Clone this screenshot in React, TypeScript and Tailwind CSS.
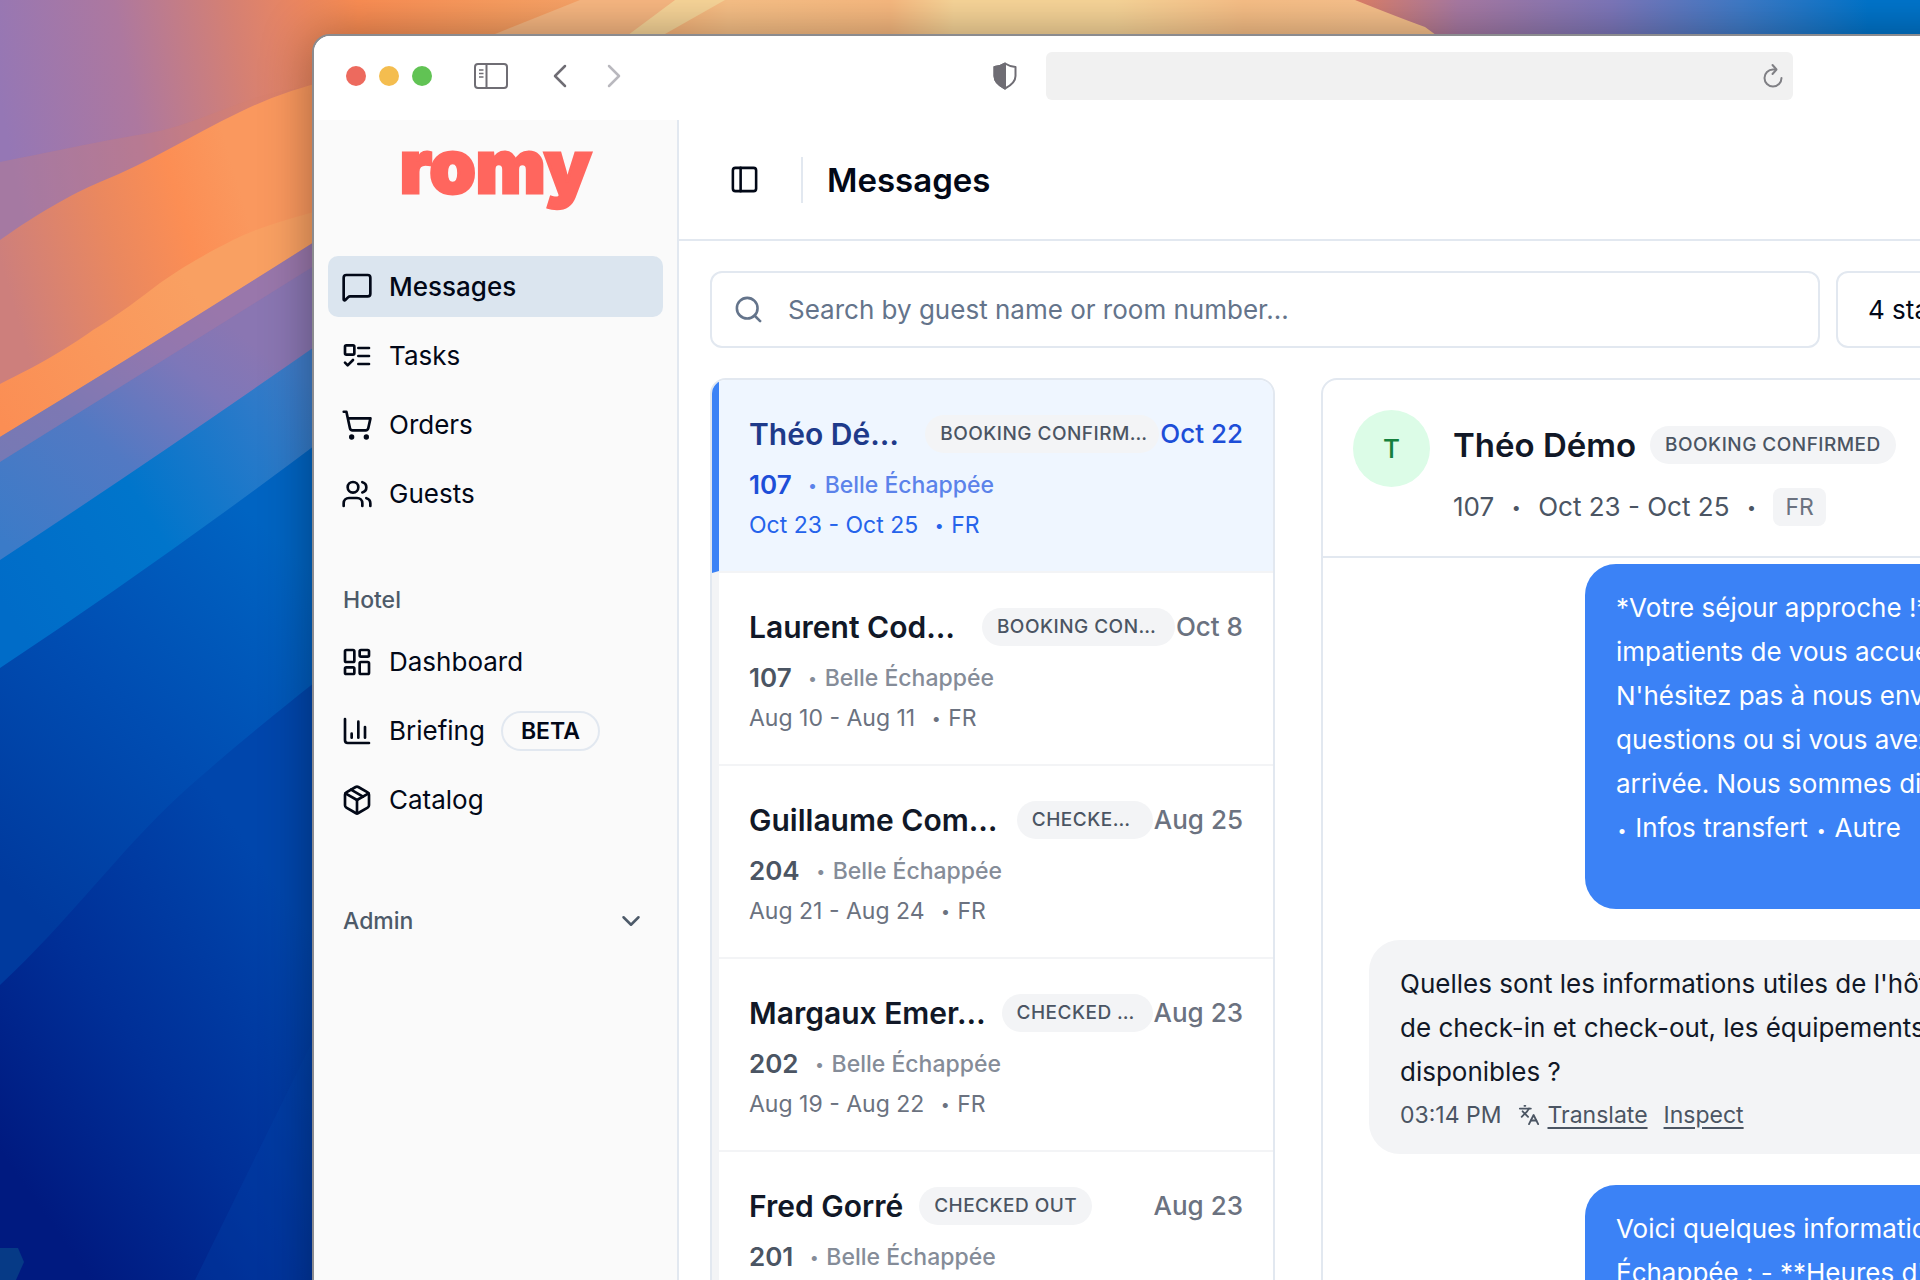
import React from 'react';
import {
  ChevronDown,
  ChevronLeft,
  ChevronRight,
  Languages,
  LayoutDashboard,
  LucideIcon,
  MessageSquare,
  Package,
  PanelLeft,
  Search,
  ShoppingCart,
  Users,
} from 'lucide-react';

interface Conversation {
  name: string;
  status: string;
  statusWidth: string;
  date: string;
  room: string;
  stay: string;
  active?: boolean;
}

const conversations: Conversation[] = [
  { name: 'Théo Dé…', status: 'BOOKING CONFIRM…', statusWidth: 'ml-auto w-[234px]', date: 'Oct 22', room: '107', stay: 'Oct 23 - Oct 25', active: true },
  { name: 'Laurent Cod…', status: 'BOOKING CON…', statusWidth: 'ml-auto w-[193px]', date: 'Oct 8', room: '107', stay: 'Aug 10 - Aug 11' },
  { name: 'Guillaume Com…', status: 'CHECKE…', statusWidth: 'ml-auto w-[136px]', date: 'Aug 25', room: '204', stay: 'Aug 21 - Aug 24' },
  { name: 'Margaux Emer…', status: 'CHECKED …', statusWidth: 'ml-auto w-[151px]', date: 'Aug 23', room: '202', stay: 'Aug 19 - Aug 22' },
  { name: 'Fred Gorré', status: 'CHECKED OUT', statusWidth: 'ml-4', date: 'Aug 23', room: '201', stay: 'Aug 18 - Aug 21' },
];

function TasksIcon({ className }: { className?: string }) {
  return (
    <svg className={className} viewBox="0 0 24 24" fill="none" stroke="currentColor" strokeWidth="2" strokeLinecap="round" strokeLinejoin="round">
      <rect x="3" y="4" width="7" height="7" rx="1" />
      <path d="m3 17 2 2 4-4" />
      <path d="M13 6h8" />
      <path d="M13 12h8" />
      <path d="M13 18h8" />
    </svg>
  );
}

function ChartIcon({ className }: { className?: string }) {
  return (
    <svg className={className} viewBox="0 0 24 24" fill="none" stroke="currentColor" strokeWidth="2" strokeLinecap="round" strokeLinejoin="round">
      <path d="M3 3v16a2 2 0 0 0 2 2h16" />
      <path d="M18 17V9" />
      <path d="M13 17V5" />
      <path d="M8 17v-3" />
    </svg>
  );
}

interface NavItemProps {
  icon: LucideIcon | typeof TasksIcon;
  label: string;
  badge?: string;
  active?: boolean;
}

function NavItem({ icon: Icon, label, badge, active }: NavItemProps) {
  return (
    <a
      href="#"
      className={`flex h-[61px] items-center gap-4 rounded-[10px] px-[13px] text-[26px] leading-9 text-[#020817] ${
        active ? 'bg-[#dbe5ef] font-medium' : ''
      }`}
    >
      <Icon className="h-8 w-8 shrink-0" />
      <span>{label}</span>
      {badge && (
        <span className="flex h-10 items-center rounded-full border-2 border-[#e2e8f0] px-[18px] text-[23px] font-semibold leading-8">
          {badge}
        </span>
      )}
    </a>
  );
}

// Desktop wallpaper behind the browser window
function Wallpaper() {
  return (
    <svg className="absolute inset-0 h-full w-full" viewBox="0 0 1920 1280" preserveAspectRatio="xMinYMin slice" aria-hidden="true">
      <defs>
        <linearGradient id="dusk" gradientUnits="userSpaceOnUse" x1="0" y1="100" x2="320" y2="40">
          <stop offset="0" stopColor="#9577b5" />
          <stop offset="0.4" stopColor="#ad789f" />
          <stop offset="0.75" stopColor="#d58073" />
          <stop offset="1" stopColor="#f0885c" />
        </linearGradient>
        <linearGradient id="ember" gradientUnits="userSpaceOnUse" x1="0" y1="260" x2="240" y2="190">
          <stop offset="0" stopColor="#cd7f7c" />
          <stop offset="0.45" stopColor="#ea885f" />
          <stop offset="0.75" stopColor="#fc8e54" />
          <stop offset="1" stopColor="#fa985e" />
        </linearGradient>
        <linearGradient id="glow" gradientUnits="userSpaceOnUse" x1="0" y1="420" x2="200" y2="300">
          <stop offset="0" stopColor="#fb8e54" />
          <stop offset="1" stopColor="#f9a062" />
        </linearGradient>
        <linearGradient id="mauve" gradientUnits="userSpaceOnUse" x1="0" y1="540" x2="200" y2="300">
          <stop offset="0" stopColor="#3b7bc8" />
          <stop offset="0.45" stopColor="#5279c3" />
          <stop offset="0.8" stopColor="#7d77b9" />
          <stop offset="1" stopColor="#8a76b2" />
        </linearGradient>
        <linearGradient id="azure" gradientUnits="userSpaceOnUse" x1="0" y1="600" x2="320" y2="400">
          <stop offset="0" stopColor="#006cc8" />
          <stop offset="0.45" stopColor="#0075cb" />
          <stop offset="1" stopColor="#3f7cc8" />
        </linearGradient>
        <linearGradient id="ocean" gradientUnits="userSpaceOnUse" x1="0" y1="880" x2="300" y2="560">
          <stop offset="0" stopColor="#003a9e" />
          <stop offset="0.5" stopColor="#004db2" />
          <stop offset="1" stopColor="#0064c2" />
        </linearGradient>
        <linearGradient id="deep" gradientUnits="userSpaceOnUse" x1="20" y1="1180" x2="330" y2="960">
          <stop offset="0" stopColor="#001a80" />
          <stop offset="0.45" stopColor="#002f97" />
          <stop offset="1" stopColor="#0046ac" />
        </linearGradient>
        <linearGradient id="sky" gradientUnits="userSpaceOnUse" x1="310" y1="0" x2="1920" y2="0">
          <stop offset="0" stopColor="#ec885d" />
          <stop offset="0.03" stopColor="#fc8e54" />
          <stop offset="0.12" stopColor="#fa9e60" />
          <stop offset="0.17" stopColor="#f9a468" />
          <stop offset="0.26" stopColor="#f9c187" />
          <stop offset="0.36" stopColor="#f9ba80" />
          <stop offset="0.4" stopColor="#f9d699" />
          <stop offset="0.5" stopColor="#f9d699" />
          <stop offset="0.58" stopColor="#f9c087" />
          <stop offset="0.66" stopColor="#f9c28c" />
        </linearGradient>
        <linearGradient id="evening" gradientUnits="userSpaceOnUse" x1="1355" y1="0" x2="1870" y2="0">
          <stop offset="0" stopColor="#df8067" />
          <stop offset="0.2" stopColor="#a97aa3" />
          <stop offset="0.5" stopColor="#7d77bb" />
          <stop offset="0.75" stopColor="#3f7bc8" />
          <stop offset="1" stopColor="#0075cc" />
        </linearGradient>
      </defs>
      <rect width="1920" height="1280" fill="#003a9e" />
      <rect width="330" height="520" fill="url(#dusk)" />
      <rect x="310" width="1610" height="60" fill="url(#sky)" />
      <path d="M580 0H675L600 60H420L490 36Z" fill="#f9b882" />
      <path d="M675 0H725L665 34L640 60H590L616 44Z" fill="#f9d699" />
      <path d="M1355 0H1920V60H1470Q1440 38 1425 27Q1400 18 1355 0Z" fill="url(#evening)" />
      <path d="M0 162C60 150 110 139 150 133C210 121 250 91 312 87V242H0Z" fill="#d97f6c" opacity="0.25" />
      <path d="M0 240C40 212 70 195 100 182C150 162 190 136 240 112Q280 92 330 80V260L0 460Z" fill="url(#ember)" />
      <path d="M0 384C40 364 65 350 93 330C120 314 140 298 160 283C190 262 210 252 233 240Q265 224 330 208V250L0 460Z" fill="url(#glow)" />
      <path d="M0 437Q160 340 330 232V420L0 580Z" fill="url(#mauve)" />
      <path d="M0 437Q160 340 330 232V256L0 462Z" fill="#a877a4" opacity="0.5" />
      <path d="M0 560Q160 455 330 336V470L0 680Z" fill="url(#azure)" />
      <path d="M0 668Q160 562 330 434V700L0 1000Z" fill="url(#ocean)" />
      <path d="M0 985C70 920 120 850 180 795C230 750 270 718 330 670V1280H0Z" fill="url(#deep)" />
      <path d="M195 1280L330 1005V1280Z" fill="#0046ac" opacity="0.3" />
      <path d="M0 1248H18L24 1262L16 1280H0Z" fill="#063a86" />
    </svg>
  );
}

function Toolbar() {
  return (
    <div className="flex h-[84px] items-center bg-white pb-1 pl-8 text-[#6f6d74]">
      <div className="flex shrink-0 gap-[13px]">
        <span className="h-5 w-5 rounded-full bg-[#ed6a5e]" />
        <span className="h-5 w-5 rounded-full bg-[#f4bd4f]" />
        <span className="h-5 w-5 rounded-full bg-[#61c354]" />
      </div>
      <button aria-label="Toggle browser sidebar" className="ml-[42px] shrink-0">
        <svg className="h-[26px] w-[34px]" viewBox="0 0 34 26" fill="none" stroke="currentColor" strokeWidth="2">
          <rect x="1" y="1" width="32" height="24" rx="3" />
          <path d="M12.500 1v24" />
          <path d="M5 7h4.500M5 10.500h4.500M5 14h4.500" strokeWidth="1.500" />
        </svg>
      </button>
      <button aria-label="Back" className="ml-8 shrink-0">
        <ChevronLeft className="h-10 w-10" strokeWidth={1.5} />
      </button>
      <button aria-label="Forward" className="ml-[14px] shrink-0 text-[#b9b8be]">
        <ChevronRight className="h-10 w-10" strokeWidth={1.5} />
      </button>
      <svg className="ml-[359px] h-7 w-6 shrink-0" viewBox="0 0 24 28" fill="none" stroke="currentColor" strokeWidth="2" strokeLinejoin="round">
        <path d="M12 1.500C9 3.500 6 4.500 1.500 5v9c0 6 4.500 9.500 10.500 12.500C18 23.500 22.500 20 22.500 14V5C18 4.500 15 3.500 12 1.500Z" />
        <path d="M12 1.500C9 3.500 6 4.500 1.500 5v9c0 6 4.500 9.500 10.500 12.500Z" fill="currentColor" />
      </svg>
      <div className="ml-[29px] mr-[335px] flex h-12 min-w-0 flex-1 items-center justify-end rounded-md bg-[#f1f1f1] pr-2">
        <button aria-label="Reload">
          <svg className="h-7 w-6" viewBox="0 0 24 28" fill="none" stroke="#808085" strokeWidth="2" strokeLinecap="round" strokeLinejoin="round">
            <path d="M20.500 16a8.500 8.500 0 1 1-8.500-8.500h2.500" />
            <path d="M11.500 3l4 4.500-4 4.500" />
          </svg>
        </button>
      </div>
    </div>
  );
}

function Sidebar() {
  return (
    <aside className="w-[365px] shrink-0 border-r-2 border-[#e2e8f0] bg-[#fafafa] px-[14px]">
      <div className="flex h-[136px] justify-center">
        <span className="text-[74px] font-black leading-[92px] text-[#ff665e] [-webkit-text-stroke:3px_#ff665e]">romy</span>
      </div>
      <nav className="flex flex-col gap-2">
        <NavItem icon={MessageSquare} label="Messages" active />
        <NavItem icon={TasksIcon} label="Tasks" />
        <NavItem icon={ShoppingCart} label="Orders" />
        <NavItem icon={Users} label="Guests" />
      </nav>
      <h2 className="mt-[45px] flex h-[61px] items-center px-[15px] text-[23px] font-medium leading-8 text-[#4d5a69]">Hotel</h2>
      <nav className="mt-px flex flex-col gap-2">
        <NavItem icon={LayoutDashboard} label="Dashboard" />
        <NavItem icon={ChartIcon} label="Briefing" badge="BETA" />
        <NavItem icon={Package} label="Catalog" />
      </nav>
      <button className="mt-[60px] flex h-[61px] w-full items-center justify-between pl-[15px] pr-[17px] text-[23px] font-medium leading-8 text-[#4d5a69]">
        Admin
        <ChevronDown className="h-[30px] w-[30px]" />
      </button>
    </aside>
  );
}

function Dot({ className = '' }: { className?: string }) {
  return <span className={`text-center text-[16px] leading-none ${className}`}>•</span>;
}

function StatusBadge({ text, className = '' }: { text: string; className?: string }) {
  return (
    <span className={`flex h-[38px] shrink-0 items-center whitespace-nowrap rounded-full bg-[#f3f4f6] px-[15px] text-[19px] font-medium leading-7 tracking-wide text-[#4b5563] ${className}`}>
      {text}
    </span>
  );
}

function ConversationRow({ name, status, statusWidth, date, room, stay, active }: Conversation) {
  return (
    <li
      className={`h-[193px] border-b-2 border-l-[7px] border-b-[#f3f4f6] pl-[30px] pr-[30px] pt-[35px] ${
        active ? 'border-l-[#3b82f6] bg-[#eff6ff]' : 'border-l-[#f3f4f6]'
      }`}
    >
      <div className="flex h-[38px] items-center whitespace-nowrap">
        <h3 className={`text-[30px] font-semibold leading-[38px] ${active ? 'text-[#1e3a8a]' : 'text-[#111827]'}`}>{name}</h3>
        <StatusBadge text={status} className={statusWidth} />
        <time className={`text-[26px] font-medium leading-9 ${active ? 'text-[#1d4ed8]' : 'text-[#6b7280]'} ${statusWidth === 'ml-4' ? 'ml-auto' : 'ml-px'}`}>{date}</time>
      </div>
      <div className={`mt-[14px] flex h-9 items-center text-[23px] font-medium ${active ? 'text-[#5b82ea]' : 'text-[#858c98]'}`}>
        <span className={`text-[26px] font-semibold leading-9 ${active ? 'text-[#1d4ed8]' : 'text-[#4b5563]'}`}>{room}</span>
        <Dot className="ml-4 mr-[7px] w-[10px]" />
        <span>Belle Échappée</span>
      </div>
      <div className={`mt-1 flex h-9 items-center text-[23px] ${active ? 'text-[#2563eb]' : 'text-[#6b7280]'}`}>
        <span>{stay}</span>
        <Dot className="ml-4 mr-[7px] w-[10px]" />
        <span>FR</span>
      </div>
    </li>
  );
}

function SentMessage({ lines, spacer }: { lines: React.ReactNode[]; spacer?: boolean }) {
  return (
    <div className="ml-[216px] rounded-[31px] bg-[#3b82f6] px-[31px] py-[22px] text-[26px] leading-[44px] text-white">
      {lines.map((line, index) => (
        <p key={index} className="whitespace-nowrap">{line}</p>
      ))}
      {spacer && <div className="h-[37px]" />}
    </div>
  );
}

export default function App() {
  return (
    <div className="relative h-screen w-full overflow-hidden pl-[312px] pt-[34px] font-['Inter',sans-serif]">
      <Wallpaper />
      <div className="relative -mr-[208px] min-h-full overflow-hidden rounded-tl-[18px] border-l-2 border-t-2 border-[#8b8b8f] bg-white shadow-[0_0_50px_rgba(0,0,0,0.35)]">
        <Toolbar />
        <div className="flex">
          <Sidebar />
          <main className="min-w-0 flex-1">
            <header className="flex h-[121px] items-center border-b-2 border-[#e2e8f0] pl-[50px]">
              <button aria-label="Toggle sidebar">
                <PanelLeft className="h-[31px] w-[31px] text-[#020817]" />
              </button>
              <div className="ml-[41px] h-[46px] w-[2px] bg-[#e2e8f0]" />
              <h1 className="ml-[24px] text-[33px] font-semibold leading-[46px] text-[#020817]">Messages</h1>
            </header>

            <div className="pl-[31px] pr-8 pt-[30px]">
              <div className="flex h-[77px] gap-4">
                <label className="flex min-w-0 flex-1 items-center gap-6 rounded-xl border-2 border-[#e2e8f0] px-[21px]">
                  <Search className="h-[31px] w-[31px] shrink-0 text-[#64748b]" />
                  <input
                    type="text"
                    aria-label="Search conversations"
                    placeholder="Search by guest name or room number..."
                    className="w-full bg-transparent text-[26px] leading-9 outline-none placeholder:text-[#64748b]"
                  />
                </label>
                <button className="flex w-[260px] items-center justify-between rounded-xl border-2 border-[#e2e8f0] px-[30px] text-[26px] leading-9 text-[#020817]">
                  4 statuses
                  <ChevronDown className="h-[30px] w-[30px]" />
                </button>
              </div>

              <div className="mt-[30px] flex gap-[46px]">
                <ul className="h-[1000px] w-[565px] shrink-0 overflow-hidden rounded-2xl border-2 border-[#e2e8f0]">
                  {conversations.map((conversation) => (
                    <ConversationRow key={conversation.name} {...conversation} />
                  ))}
                </ul>

                <section className="min-w-0 flex-1 overflow-hidden rounded-2xl border-2 border-[#e2e8f0]">
                  <div className="flex h-[178px] gap-[23px] whitespace-nowrap border-b-2 border-[#e2e8f0] pl-[30px] pt-[30px]">
                    <div className="flex h-[77px] w-[77px] shrink-0 items-center justify-center rounded-full bg-[#dcfce7] text-[26px] font-medium text-[#15803d]">
                      T
                    </div>
                    <div className="pt-[10px]">
                      <div className="flex items-center gap-[14px]">
                        <h2 className="text-[33px] font-semibold leading-[50px] text-[#111827]">Théo Démo</h2>
                        <StatusBadge text="BOOKING CONFIRMED" />
                      </div>
                      <div className="mt-[18px] flex h-[38px] items-center gap-[15px] text-[26px] leading-9 text-[#4b5563]">
                        <span>107</span>
                        <Dot className="w-[14px]" />
                        <span>Oct 23 - Oct 25</span>
                        <Dot className="w-[14px]" />
                        <span className="flex h-[38px] items-center rounded-lg bg-[#f3f4f6] px-3 text-[23px] text-[#6b7280]">FR</span>
                      </div>
                    </div>
                  </div>

                  <div className="flex flex-col gap-[31px] py-[6px] pl-[46px]">
                    <SentMessage
                      spacer
                      lines={[
                        '*Votre séjour approche !*',
                        'impatients de vous accueillir',
                        "N'hésitez pas à nous envoyer",
                        'questions ou si vous avez',
                        'arrivée. Nous sommes disponibles',
                        <>
                          <Dot className="inline-block w-3 align-middle" /> Infos transfert <Dot className="inline-block w-3 align-middle" /> Autre
                        </>,
                      ]}
                    />
                    <div className="whitespace-nowrap rounded-[31px] bg-[#f3f4f6] px-[31px] py-[22px] text-[26px] leading-[44px] text-[#111827]">
                      <p>Quelles sont les informations utiles de l'hôtel</p>
                      <p>de check-in et check-out, les équipements</p>
                      <p>disponibles ?</p>
                      <div className="flex h-[38px] items-center pt-1 text-[23px] leading-8 text-[#4b5563]">
                        <span>03:14 PM</span>
                        <Languages className="ml-4 h-[22px] w-[22px]" />
                        <button className="ml-2 underline underline-offset-4">Translate</button>
                        <button className="ml-4 underline underline-offset-4">Inspect</button>
                      </div>
                    </div>
                    <SentMessage lines={['Voici quelques informations', "Échappée : - **Heures d'arrivée"]} />
                  </div>
                </section>
              </div>
            </div>
          </main>
        </div>
      </div>
    </div>
  );
}
